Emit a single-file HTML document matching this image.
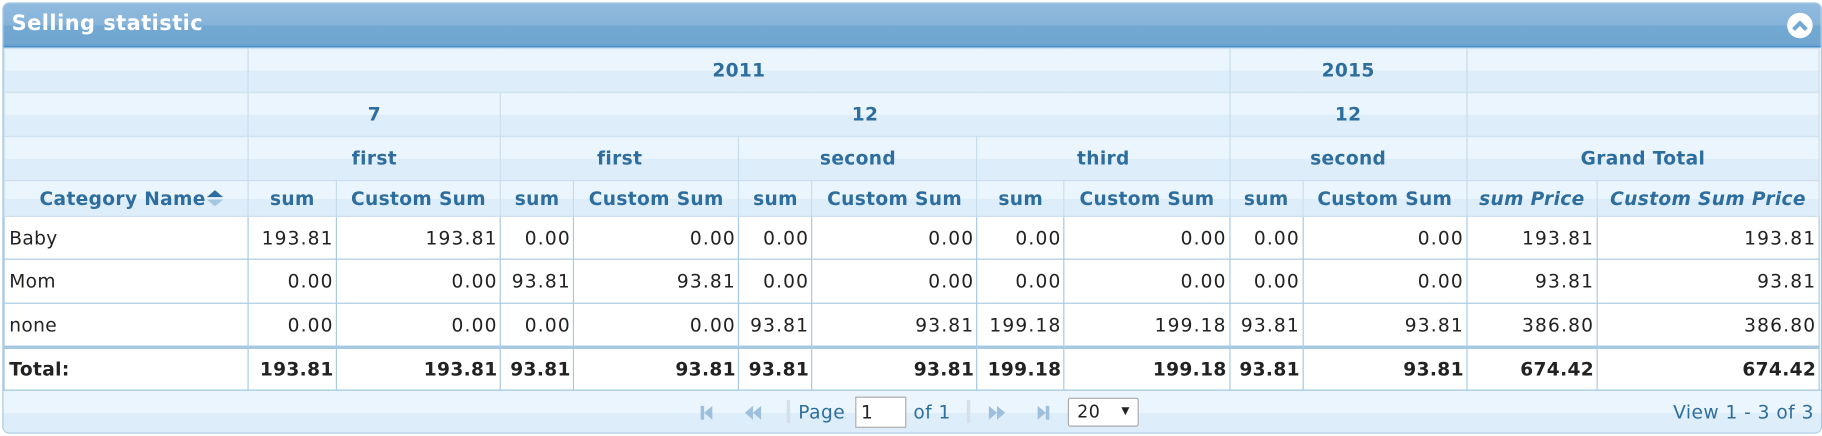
<!DOCTYPE html>
<html><head><meta charset="utf-8"><style>
*{margin:0;padding:0;box-sizing:border-box}
html,body{width:1822px;height:436px;overflow:hidden;background:#fff}
#w{position:absolute;left:0;top:0;width:1568px;height:376px;transform-origin:0 0;transform:scale(1.16199,1.15957);font-family:"DejaVu Sans","Liberation Sans",sans-serif}
#box{position:absolute;left:2px;top:2px;width:1566px;height:372px;border:1px solid #a6c9e2;border-radius:6px;overflow:hidden;background:#fff}
#cap{position:absolute;left:0;top:0;width:100%;height:38px;background:linear-gradient(#90bade 0,#88b4da 50%,#72a8d2 55%,#6fa6d0 100%);border-bottom:2px solid #4a8fc9;color:#fff;font-weight:bold;font-size:18px;letter-spacing:0.4px;line-height:36px;padding-left:7px}
#tog{position:absolute;right:7px;top:8px;width:22px;height:22px;border-radius:50%;background:#fff}
table{position:absolute;left:0;top:38px;border-collapse:collapse;table-layout:fixed;width:1563px}
th{background:linear-gradient(#ebf5fd 0,#ebf5fd 50%,#deedfa 50%,#deedfa 100%);color:#2e6e9e;font-weight:bold;font-size:16px;letter-spacing:0.3px;border:1px solid #c5dbec;text-align:center;white-space:nowrap;overflow:hidden}
th.i{font-style:italic}
td{border:1px solid #a6c9e2;font-size:16px;letter-spacing:1px;color:#222;text-align:right;padding:0 2px 0 3px;white-space:nowrap;overflow:hidden}
td.l{text-align:left;padding-left:4px;letter-spacing:0.3px}
tr.t td{font-weight:bold;border-top:3px solid #a6c9e2;letter-spacing:0.3px}
#pg{position:absolute;left:0;top:333px;width:100%;height:39px;background:linear-gradient(#ebf5fd 0,#ebf5fd 50%,#deedfa 50%,#deedfa 100%);border-top:1px solid #a6c9e2;color:#2e6e9e;font-size:16px;letter-spacing:0.4px}
#pg span{position:absolute;top:9px}
.ic{position:absolute;top:12px;fill:#9fc0dc}
.sep{position:absolute;top:8px;width:3px;height:20px;background:#d5dfe8}
</style></head><body><div id="w"><div id="box">
<div id="cap">Selling statistic<div id="tog"><svg width="22" height="22" viewBox="0 0 22 22"><path d="M5.5 13.5 L11 8 L16.5 13.5" fill="none" stroke="#72a8d2" stroke-width="3.5"/></svg></div></div>
<table>
<colgroup><col style="width:210px"><col style="width:76px"><col style="width:141px"><col style="width:63px"><col style="width:142px"><col style="width:63px"><col style="width:142px"><col style="width:75px"><col style="width:142px"><col style="width:63px"><col style="width:141px"><col style="width:112px"><col style="width:191px"></colgroup>
<tr style="height:38px"><th></th><th colspan="8">2011</th><th colspan="2">2015</th><th colspan="2"></th></tr>
<tr style="height:38px"><th></th><th colspan="2">7</th><th colspan="6">12</th><th colspan="2">12</th><th colspan="2"></th></tr>
<tr style="height:38px"><th></th><th colspan="2">first</th><th colspan="2">first</th><th colspan="2">second</th><th colspan="2">third</th><th colspan="2">second</th><th colspan="2">Grand Total</th></tr>
<tr style="height:31px"><th style="padding-left:10px">Category Name<svg width="16" height="18" viewBox="0 0 16 18" style="vertical-align:-3px"><path d="M1 8 L8 2 L15 8Z" fill="#2e6e9e"/><path d="M1 10 L8 16 L15 10Z" fill="#a5c5e0"/></svg></th><th>sum</th><th>Custom Sum</th><th>sum</th><th>Custom Sum</th><th>sum</th><th>Custom Sum</th><th>sum</th><th>Custom Sum</th><th>sum</th><th>Custom Sum</th><th class="i">sum Price</th><th class="i">Custom Sum Price</th></tr>
<tr style="height:37px"><td class="l">Baby</td><td>193.81</td><td>193.81</td><td>0.00</td><td>0.00</td><td>0.00</td><td>0.00</td><td>0.00</td><td>0.00</td><td>0.00</td><td>0.00</td><td>193.81</td><td>193.81</td></tr>
<tr style="height:38px"><td class="l">Mom</td><td>0.00</td><td>0.00</td><td>93.81</td><td>93.81</td><td>0.00</td><td>0.00</td><td>0.00</td><td>0.00</td><td>0.00</td><td>0.00</td><td>93.81</td><td>93.81</td></tr>
<tr style="height:38px"><td class="l">none</td><td>0.00</td><td>0.00</td><td>0.00</td><td>0.00</td><td>93.81</td><td>93.81</td><td>199.18</td><td>199.18</td><td>93.81</td><td>93.81</td><td>386.80</td><td>386.80</td></tr>
<tr class="t" style="height:37px"><td class="l">Total:</td><td>193.81</td><td>193.81</td><td>93.81</td><td>93.81</td><td>93.81</td><td>93.81</td><td>199.18</td><td>199.18</td><td>93.81</td><td>93.81</td><td>674.42</td><td>674.42</td></tr>
</table>
<div id="pg">
<svg class="ic" style="left:598px" width="14" height="14" viewBox="0 0 14 14"><rect x="2" y="1" width="3" height="12"/><path d="M12 1 L5 7 L12 13Z"/></svg>
<svg class="ic" style="left:636px" width="18" height="14" viewBox="0 0 18 14"><path d="M9 1 L2 7 L9 13Z M16 1 L9 7 L16 13Z"/></svg>
<div class="sep" style="left:674px"></div>
<span style="left:684px">Page</span>
<div style="position:absolute;left:733px;top:5px;width:44px;height:27px;border:1px solid #aaa;background:#fff;color:#222;font-size:16px;line-height:25px;padding-left:4px">1</div>
<span style="left:783px">of 1</span>
<div class="sep" style="left:829px"></div>
<svg class="ic" style="left:846px" width="18" height="14" viewBox="0 0 18 14"><path d="M2 1 L9 7 L2 13Z M9 1 L16 7 L9 13Z"/></svg>
<svg class="ic" style="left:888px" width="14" height="14" viewBox="0 0 14 14"><path d="M2 1 L9 7 L2 13Z"/><rect x="9" y="1" width="3" height="12"/></svg>
<div style="position:absolute;left:916px;top:6px;width:61px;height:25px;border:1px solid #aaa;border-radius:2px;background:#fff;color:#222;font-size:15px;line-height:23px;padding-left:7px">20<span style="left:45px;top:0;font-size:9px">▼</span></div>
<span style="right:6px">View 1 - 3 of 3</span>
</div>
</div></div></body></html>
